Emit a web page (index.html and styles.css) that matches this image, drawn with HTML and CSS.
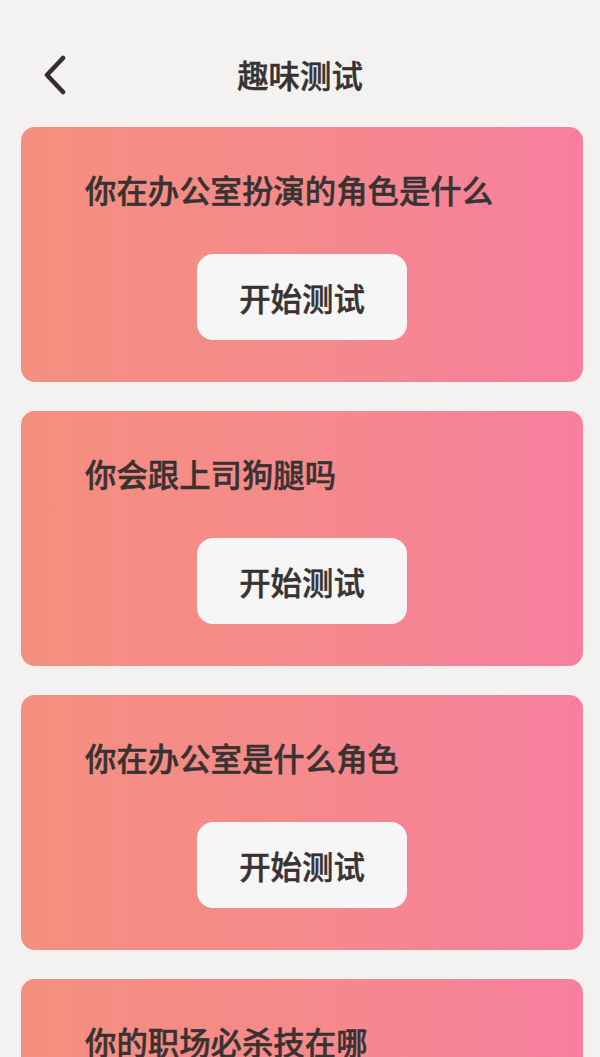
FILE: index.html
```html
<!DOCTYPE html>
<html lang="zh-CN">
<head>
<meta charset="utf-8">
<title>趣味测试</title>
<link rel="stylesheet" href="styles.css">
</head>
<body>
<div class="page">
  <header class="header">
    <button class="back" aria-label="返回">
      <svg width="24" height="40" viewBox="0 0 24 40"><path d="M20 3 L4 20 L20 37" fill="none" stroke="#342e2e" stroke-width="4.6" stroke-linecap="round" stroke-linejoin="round"/></svg>
    </button>
    <h1 class="title">趣味测试</h1>
  </header>
  <main class="list">
    <section class="card">
      <h2 class="card-title">你在办公室扮演的角色是什么</h2>
      <button class="start">开始测试</button>
    </section>
    <section class="card">
      <h2 class="card-title">你会跟上司狗腿吗</h2>
      <button class="start">开始测试</button>
    </section>
    <section class="card">
      <h2 class="card-title">你在办公室是什么角色</h2>
      <button class="start">开始测试</button>
    </section>
    <section class="card">
      <h2 class="card-title">你的职场必杀技在哪</h2>
      <button class="start">开始测试</button>
    </section>
  </main>
</div>
</body>
</html>
```

FILE: styles.css
```css
* { box-sizing: border-box; }
html, body {
  margin: 0;
  padding: 0;
  background: #f3f2f1;
  font-family: "Noto Sans CJK SC", "Noto Sans", sans-serif;
  color: #3b3535;
}
.page {
  width: 600px;
  height: 1057px;
  overflow: hidden;
}
.header {
  position: relative;
  height: 46px;
  margin-top: 52px;
  display: flex;
  align-items: center;
  justify-content: center;
}
.back {
  position: absolute;
  left: 43px;
  top: 3px;
  width: 24px;
  height: 40px;
  padding: 0;
  border: 0;
  background: none;
  display: flex;
}
.title,
.card-title,
.start {
  font-size: 31.4px;
  font-weight: 500;
  color: #383232;
  -webkit-text-stroke: 0.45px #383232;
}
.title {
  margin: 0;
  line-height: 40px;
}
.list {
  margin-top: 29px;
  padding: 0 17px 0 21px;
  display: flex;
  flex-direction: column;
  gap: 29px;
}
.card {
  height: 255px;
  flex-shrink: 0;
  border-radius: 14px;
  background: linear-gradient(90deg, #f48f7e 0%, #f58a8b 50%, #f77f9f 100%);
  padding: 43px 0 42px 64px;
  display: flex;
  flex-direction: column;
}
.card-title {
  margin: 0;
  line-height: 40px;
}
.start {
  margin: 44px 0 0 112px;
  width: 210px;
  height: 86px;
  border: 0;
  border-radius: 16px;
  background: #f7f6f6;
  font-family: inherit;
  padding: 0;
}
```
